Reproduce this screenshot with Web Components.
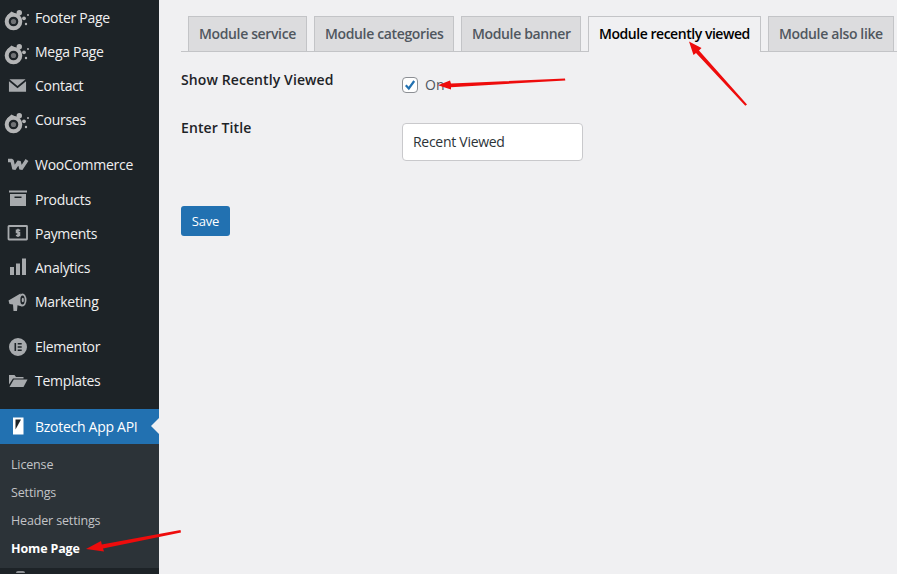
<!DOCTYPE html>
<html>
<head>
<meta charset="utf-8">
<title>Module recently viewed</title>
<style>
  html, body { margin: 0; padding: 0; height: 100%; overflow: hidden; background: #f0f0f2; }
  body { font-family: "Open Sans", "Noto Sans", "Liberation Sans", sans-serif; }
</style>
</head>
<body>
<admin-shell>
  <admin-menu slot="menu"></admin-menu>
  <settings-page></settings-page>
  <note-arrows slot="overlay"></note-arrows>
</admin-shell>

<script>
(function () {
  const SWIRL = `<svg viewBox="0 0 28 28" width="28" height="28"><circle cx="11.500" cy="15.500" r="6.800" fill="none" stroke="#b4b5b6" stroke-width="4"/><path d="M5 9.500 9.500 5.500 13 7.500 8 11Z" fill="#b4b5b6"/><circle cx="11.500" cy="15.500" r="2.600" fill="#b4b5b6" opacity=".55"/><circle cx="17.300" cy="6.700" r="2.700" fill="#b4b5b6"/><circle cx="22" cy="12.300" r="1.900" fill="#b4b5b6"/><circle cx="26" cy="9" r="1" fill="#b4b5b6"/><circle cx="24" cy="18" r="1.200" fill="#b4b5b6"/></svg>`;

  const ICONS = {
    swirl: SWIRL,
    mail: `<svg viewBox="0 0 20 20" width="19" height="19"><path d="M1.500 3.500h17L10 10.500Z" fill="#a7aaad"/><path d="M1 5.600 10 13l9-7.400V16.500H1Z" fill="#a7aaad"/></svg>`,
    woo: `<svg viewBox="0 0 22 20" width="22" height="20"><path d="M1 5.500H5L7 14 12 6.500 14 14 20 5" fill="none" stroke="#a7aaad" stroke-width="3.400" stroke-linejoin="bevel"/></svg>`,
    box: `<svg viewBox="0 0 20 20" width="20" height="20"><rect x="1" y="1.500" width="18" height="2" fill="#a7aaad"/><path d="M2 5h16v12H2Zm4.500 2.500v1.500h7V7.500Z" fill="#a7aaad" fill-rule="evenodd"/></svg>`,
    money: `<svg viewBox="0 0 22 18" width="22" height="18"><rect x="1.500" y="2" width="18.500" height="13.500" fill="none" stroke="#a7aaad" stroke-width="1.800" rx=".5"/><path d="M13.200 6.200h-3.700v2.400h3v3h-3.600M11 4.800v8.200" fill="none" stroke="#a7aaad" stroke-width="1.500"/></svg>`,
    bars: `<svg viewBox="0 0 20 20" width="20" height="20"><rect x="2" y="10" width="4" height="8" fill="#a7aaad"/><rect x="8" y="6.500" width="4" height="11.500" fill="#a7aaad"/><rect x="14" y="1.500" width="4" height="16.500" fill="#a7aaad"/></svg>`,
    horn: `<svg viewBox="0 0 20 20" width="20" height="20"><path d="M.5 8.500 12.500 1.500l1.500 13L9.500 13.300 9 19H5.500L5 12.500 1.500 12Z" fill="#a7aaad"/><ellipse cx="14.500" cy="8" rx="4" ry="6.500" fill="#a7aaad"/><ellipse cx="14.500" cy="8" rx="2.200" ry="4.500" fill="#1d2327"/><ellipse cx="14.800" cy="8" rx="1.100" ry="2.200" fill="#a7aaad"/></svg>`,
    elementor: `<svg viewBox="0 0 20 20" width="20" height="20"><path d="M10 1a9 9 0 1 0 0 18 9 9 0 0 0 0-18ZM6.500 6h1.600v8H6.500Zm3.200 0h4v1.600h-4Zm0 3.200h4v1.600h-4Zm0 3.200h4V14h-4Z" fill="#a7aaad" fill-rule="evenodd"/></svg>`,
    folder: `<svg viewBox="0 0 20 20" width="20" height="20"><path d="M1 4h5.500l1.500 2h7.500v1.500H5L1 13.500Z" fill="#a7aaad"/><path d="M5.800 8.500H19.500L15.500 16H1.500Z" fill="#a7aaad"/></svg>`,
    phone: `<svg viewBox="0 0 20 20" width="20" height="20"><rect x="5" y="1.500" width="10.500" height="17" fill="#fff"/><path d="M7.500 3.500H13L7.500 13.500Z" fill="#1d2327"/></svg>`,
  };

  // sidebar row; the icon name comes in as an attribute, the label through the slot
  class MenuItem extends HTMLElement {
    constructor() {
      super();
      const shadowRoot = this.attachShadow({ mode: 'open' });
      const icon = this.getAttribute('icon');
      const wide = icon === 'swirl';
      shadowRoot.innerHTML = `
        <style>
          :host { display: flex; align-items: center; height: 34.2px; color: #f0f0f1; font-size: 14px; letter-spacing: -.28px; white-space: nowrap; }
          :host([current]) { height: 35px; box-sizing: border-box; padding-bottom: 1px; background: #2271b1; color: #fff; position: relative; }
          :host([current])::after {
            content: ''; position: absolute; right: 0; top: 9px;
            border: 8px solid transparent; border-right-color: #f0f0f2; border-left-width: 0;
          }
          .icon { flex: none; width: 35px; display: flex; justify-content: center; }
          .icon.swirl { justify-content: flex-start; padding-left: 2px; width: 33px; }
          .icon.swirl svg { margin-top: 6px; }
          svg { display: block; }
        </style>
        <span class="icon ${wide ? 'swirl' : ''}">${ICONS[icon] || ''}</span>
        <slot></slot>`;
    }
  }

  class SubItem extends HTMLElement {
    constructor() {
      super();
      this.attachShadow({ mode: 'open' }).innerHTML = `
        <style>
          :host { display: flex; align-items: center; height: 28px; padding-left: 11px; color: #c3c4c7; font-size: 12.5px; letter-spacing: -.15px; }
          :host([active]) { color: #fff; font-weight: 700; }
        </style>
        <slot></slot>`;
    }
  }

  class AdminMenu extends HTMLElement {
    constructor() {
      super();
      this.attachShadow({ mode: 'open' }).innerHTML = `
        <style>
          :host { display: block; width: 159px; height: 100%; background: #1d2327; overflow: hidden; }
          .sep { height: 11px; }
          .sub { height: 124px; background: #2c3338; padding-top: 6px; box-sizing: border-box; }
          .more { padding: 3px 0 0 16px; }
          .more i { display: block; width: 9px; height: 2px; background: #8c8f94; border-radius: 2px 2px 0 0; }
        </style>
        <menu-item icon="swirl">Footer Page</menu-item>
        <menu-item icon="swirl">Mega Page</menu-item>
        <menu-item icon="mail">Contact</menu-item>
        <menu-item icon="swirl">Courses</menu-item>
        <div class="sep"></div>
        <menu-item icon="woo">WooCommerce</menu-item>
        <menu-item icon="box">Products</menu-item>
        <menu-item icon="money">Payments</menu-item>
        <menu-item icon="bars">Analytics</menu-item>
        <menu-item icon="horn">Marketing</menu-item>
        <div class="sep"></div>
        <menu-item icon="elementor">Elementor</menu-item>
        <menu-item icon="folder">Templates</menu-item>
        <div class="sep"></div>
        <menu-item icon="phone" current>Bzotech App API</menu-item>
        <div class="sub">
          <sub-item>License</sub-item>
          <sub-item>Settings</sub-item>
          <sub-item>Header settings</sub-item>
          <sub-item active>Home Page</sub-item>
        </div>
        <div class="more"><i></i></div>`;
    }
  }

  class TabBar extends HTMLElement {
    constructor() {
      super();
      this.attachShadow({ mode: 'open' }).innerHTML = `
        <style>
          :host { display: flex; gap: 7px; padding-left: 7px; height: 35px; border-bottom: 1px solid #c3c4c7; }
        </style>
        <slot></slot>`;
    }
  }

  class TabItem extends HTMLElement {
    constructor() {
      super();
      this.attachShadow({ mode: 'open' }).innerHTML = `
        <style>
          :host {
            display: flex; flex: none; align-items: center; height: 35px; box-sizing: border-box; padding: 0 0 2px 10px;
            width: var(--tab-width);
            background: #dcdcde; color: #50575e; border: 1px solid #c3c4c7; border-bottom: 0;
            font-size: 14px; font-weight: 600; letter-spacing: -.36px; white-space: nowrap;
          }
          :host([active]) { height: 36px; padding-bottom: 3px; background: #f0f0f2; color: #000; letter-spacing: -.46px; }
        </style>
        <slot></slot>`;
    }
  }

  class FieldRow extends HTMLElement {
    constructor() {
      super();
      this.attachShadow({ mode: 'open' }).innerHTML = `
        <style>
          :host { display: grid; grid-template-columns: 221px 1fr; color: #1d2327; }
          .label { font-size: 14px; font-weight: 600; letter-spacing: .1px; }
        </style>
        <div class="label"><slot name="label"></slot></div>
        <div><slot></slot></div>`;
    }
  }

  class CheckField extends HTMLElement {
    constructor() {
      super();
      this.attachShadow({ mode: 'open' }).innerHTML = `
        <style>
          :host { display: flex; align-items: center; gap: 7px; color: #50575e; font-size: 14px; }
          .box { width: 16px; height: 16px; box-sizing: border-box; background: #fff; border: 1px solid #8c8f94; border-radius: 4px; display: block; }
        </style>
        <svg class="box" viewBox="0 0 14 14"><path d="M2.800 7.200 5.800 10.500 11.200 3" fill="none" stroke="#2271b1" stroke-width="2.200"/></svg>
        <slot></slot>`;
    }
  }

  class TextField extends HTMLElement {
    constructor() {
      super();
      this.attachShadow({ mode: 'open' }).innerHTML = `
        <style>
          :host { display: block; width: 181px; }
          input {
            display: block; width: 100%; height: 38px; box-sizing: border-box; padding: 0 10px 2px;
            background: #fff; border: 1px solid #c9c9cc; border-radius: 4px; color: #2c3338;
            font: 14px "Open Sans", "Noto Sans", sans-serif; letter-spacing: -.28px;
          }
        </style>
        <input type="text" value="${this.getAttribute('value') || ''}">`;
    }
  }

  class SaveButton extends HTMLElement {
    constructor() {
      super();
      this.attachShadow({ mode: 'open' }).innerHTML = `
        <style>
          :host { display: flex; align-items: center; justify-content: center; width: 49px; height: 30px; background: #2271b1; border-radius: 3px; color: #fff; font-size: 13px; letter-spacing: -.2px; }
        </style>
        <slot></slot>`;
    }
  }

  class SettingsPage extends HTMLElement {
    constructor() {
      super();
      this.attachShadow({ mode: 'open' }).innerHTML = `
        <style>
          :host { display: block; flex: 1; min-width: 0; padding: 16px 0 0 22px; }
          .first { margin-top: 18px; }
          .second { margin-top: 24px; }
          .second text-field { margin-top: 5px; }
          .save { margin-top: 45px; }
          .check { padding-top: 5px; }
        </style>
        <tab-bar>
          <tab-item style="--tab-width: 119px">Module service</tab-item>
          <tab-item style="--tab-width: 140px">Module categories</tab-item>
          <tab-item style="--tab-width: 120px">Module banner</tab-item>
          <tab-item style="--tab-width: 173px" active>Module recently viewed</tab-item>
          <tab-item style="--tab-width: 126px">Module also like</tab-item>
        </tab-bar>
        <field-row class="first">
          <span slot="label">Show Recently Viewed</span>
          <div class="check"><check-field>On</check-field></div>
        </field-row>
        <field-row class="second">
          <span slot="label">Enter Title</span>
          <text-field value="Recent Viewed"></text-field>
        </field-row>
        <div class="save"><save-button>Save</save-button></div>`;
    }
  }

  // red hand drawn annotations sit over the page, so this one is absolute
  class NoteArrows extends HTMLElement {
    constructor() {
      super();
      this.attachShadow({ mode: 'open' }).innerHTML = `
        <style>
          :host { position: absolute; inset: 0; pointer-events: none; }
          svg { display: block; }
        </style>
        <svg width="897" height="574" viewBox="0 0 897 574">
          <g fill="#ee0c0c" stroke="none">
            <path d="M565 78.500 565.300 80.500 451 87.200 451 89.500 438 85.200 450 80.500 451 83.500Z"/>
            <path d="M745.300 105.800 747 104.500 699 50.500 701.500 48 689 41.500 693.500 55 696 53Z"/>
            <path d="M180.500 530 181 532.500 103 548.500 104 551.500 86 549 101 541 101.800 544.500Z"/>
          </g>
        </svg>`;
    }
  }

  class AdminShell extends HTMLElement {
    constructor() {
      super();
      this.attachShadow({ mode: 'open' }).innerHTML = `
        <style>
          :host { display: flex; height: 574px; overflow: hidden; position: relative; background: #f0f0f2; }
        </style>
        <slot name="menu"></slot>
        <slot></slot>
        <slot name="overlay"></slot>`;
    }
  }

  customElements.define('menu-item', MenuItem);
  customElements.define('sub-item', SubItem);
  customElements.define('admin-menu', AdminMenu);
  customElements.define('tab-bar', TabBar);
  customElements.define('tab-item', TabItem);
  customElements.define('field-row', FieldRow);
  customElements.define('check-field', CheckField);
  customElements.define('text-field', TextField);
  customElements.define('save-button', SaveButton);
  customElements.define('settings-page', SettingsPage);
  customElements.define('note-arrows', NoteArrows);
  customElements.define('admin-shell', AdminShell);
}());
</script>
</body>
</html>
